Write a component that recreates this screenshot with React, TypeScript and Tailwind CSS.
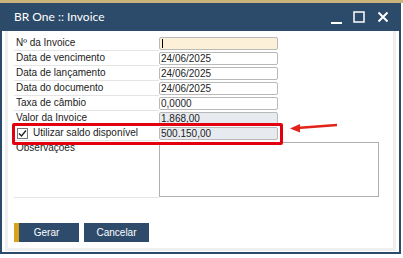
import React from "react";

const rows = [
  { label: "Nº da Invoice", value: "", kind: "focus" },
  { label: "Data de vencimento", value: "24/06/2025", kind: "edit" },
  { label: "Data de lançamento", value: "24/06/2025", kind: "edit" },
  { label: "Data do documento", value: "24/06/2025", kind: "edit" },
  { label: "Taxa de câmbio", value: "0,0000", kind: "edit" },
  { label: "Valor da Invoice", value: "1.868,00", kind: "read" },
];

function Field({ value, kind }: { value: string; kind: string }) {
  const bg =
    kind === "focus" ? "bg-[#fdf0d8]" : kind === "read" ? "bg-[#e7ebf0]" : "bg-white";
  return (
    <div
      className={`mt-px h-[13px] w-[119px] rounded-[2px] border border-[#b9b9b9] ${bg} pl-px text-[10px] leading-[11px] text-[#222]`}
    >
      {kind === "focus" ? <div className="ml-px mt-[1px] h-[9px] w-px bg-black" /> : value}
    </div>
  );
}

export default function App() {
  return (
    <div className="relative h-[258px] w-[403px] overflow-hidden bg-white font-['Liberation_Sans',Arial,sans-serif]">
      <div className="h-[3px] bg-[#c9b47c]" />

      <div className="flex h-[251px] w-[401px] flex-col border-x-2 border-b-2 border-[#2c4a6a] bg-white">
        {/* Title bar */}
        <div className="flex h-[28px] shrink-0 items-center bg-[#2c4a6a] pl-[12px] text-white">
          <span className="font-['Lato',sans-serif] text-[12px]">BR One :: Invoice</span>
          <div className="ml-auto flex items-center">
            <svg width="12" height="12" viewBox="0 0 12 12" className="mr-[10px] mt-[4px]">
              <rect x="0" y="9" width="11" height="2" fill="white" />
            </svg>
            <svg width="12" height="12" viewBox="0 0 12 12" className="mr-[12px]">
              <rect x="1" y="1" width="10" height="10" fill="none" stroke="white" strokeWidth="1.5" />
            </svg>
            <svg width="12" height="12" viewBox="0 0 12 12" className="mr-[10px]">
              <path d="M1.5 1.5 L10.5 10.5 M10.5 1.5 L1.5 10.5" stroke="white" strokeWidth="2" />
            </svg>
          </div>
        </div>

        {/* Body */}
        <div className="flex-1 px-[3px] pb-px">
          <div className="h-full border-[3px] border-t-0 border-[#efefef] pl-[6px] pt-[5px] text-[10px] text-[#222]">
            {rows.map((r) => (
              <div key={r.label} className="flex h-[15px]">
                <div className="h-[15px] w-[145px] border-b border-[#e4e4e4] pl-[2px] leading-[14px]">
                  {r.label}
                </div>
                <Field value={r.value} kind={r.kind} />
              </div>
            ))}

            <div className="flex h-[15px]">
              <div className="flex h-[15px] w-[145px] items-center border-b border-[#e4e4e4] pl-[3px]">
                <div className="flex h-[11px] w-[11px] items-center justify-center border border-[#777] bg-white">
                  <svg width="9" height="9" viewBox="0 0 9 9">
                    <path d="M1 4.5 L3.5 7 L8 1.5" fill="none" stroke="#222" strokeWidth="1.4" />
                  </svg>
                </div>
                <span className="ml-[5px] leading-[14px]">Utilizar saldo disponível</span>
              </div>
              <Field value="500.150,00" kind="read" />
            </div>

            <div className="flex h-[57px]">
              <div className="h-[57px] w-[145px] border-b border-[#e4e4e4] pl-[2px] leading-[14px]">
                Observações
              </div>
              <div className="mt-px h-[55px] w-[220px] border border-[#b0b0b0] bg-white" />
            </div>

            <div className="mt-[25px] flex gap-[5px]">
              <button className="flex h-[19px] w-[65px] bg-[#2e4b6c] text-[10px] text-white">
                <span className="h-full w-[5px] bg-[#d9a21b]" />
                <span className="flex-1 pr-[5px] leading-[19px]">Gerar</span>
              </button>
              <button className="h-[19px] w-[65px] bg-[#2e4b6c] text-[10px] leading-[19px] text-white">
                Cancelar
              </button>
            </div>
          </div>
        </div>
      </div>

      {/* annotation: red highlight */}
      <div className="absolute left-[12px] top-[123px] h-[22px] w-[271px] rounded-[2px] border-[3px] border-[#e2000f]" />
      <svg className="absolute left-[288px] top-[119px]" width="52" height="16" viewBox="0 0 52 16">
        <path d="M49 6 L9 9" stroke="#e2231a" strokeWidth="2.5" />
        <polygon points="2,9.5 12,5 12,13.5" fill="#e2231a" />
      </svg>
    </div>
  );
}
